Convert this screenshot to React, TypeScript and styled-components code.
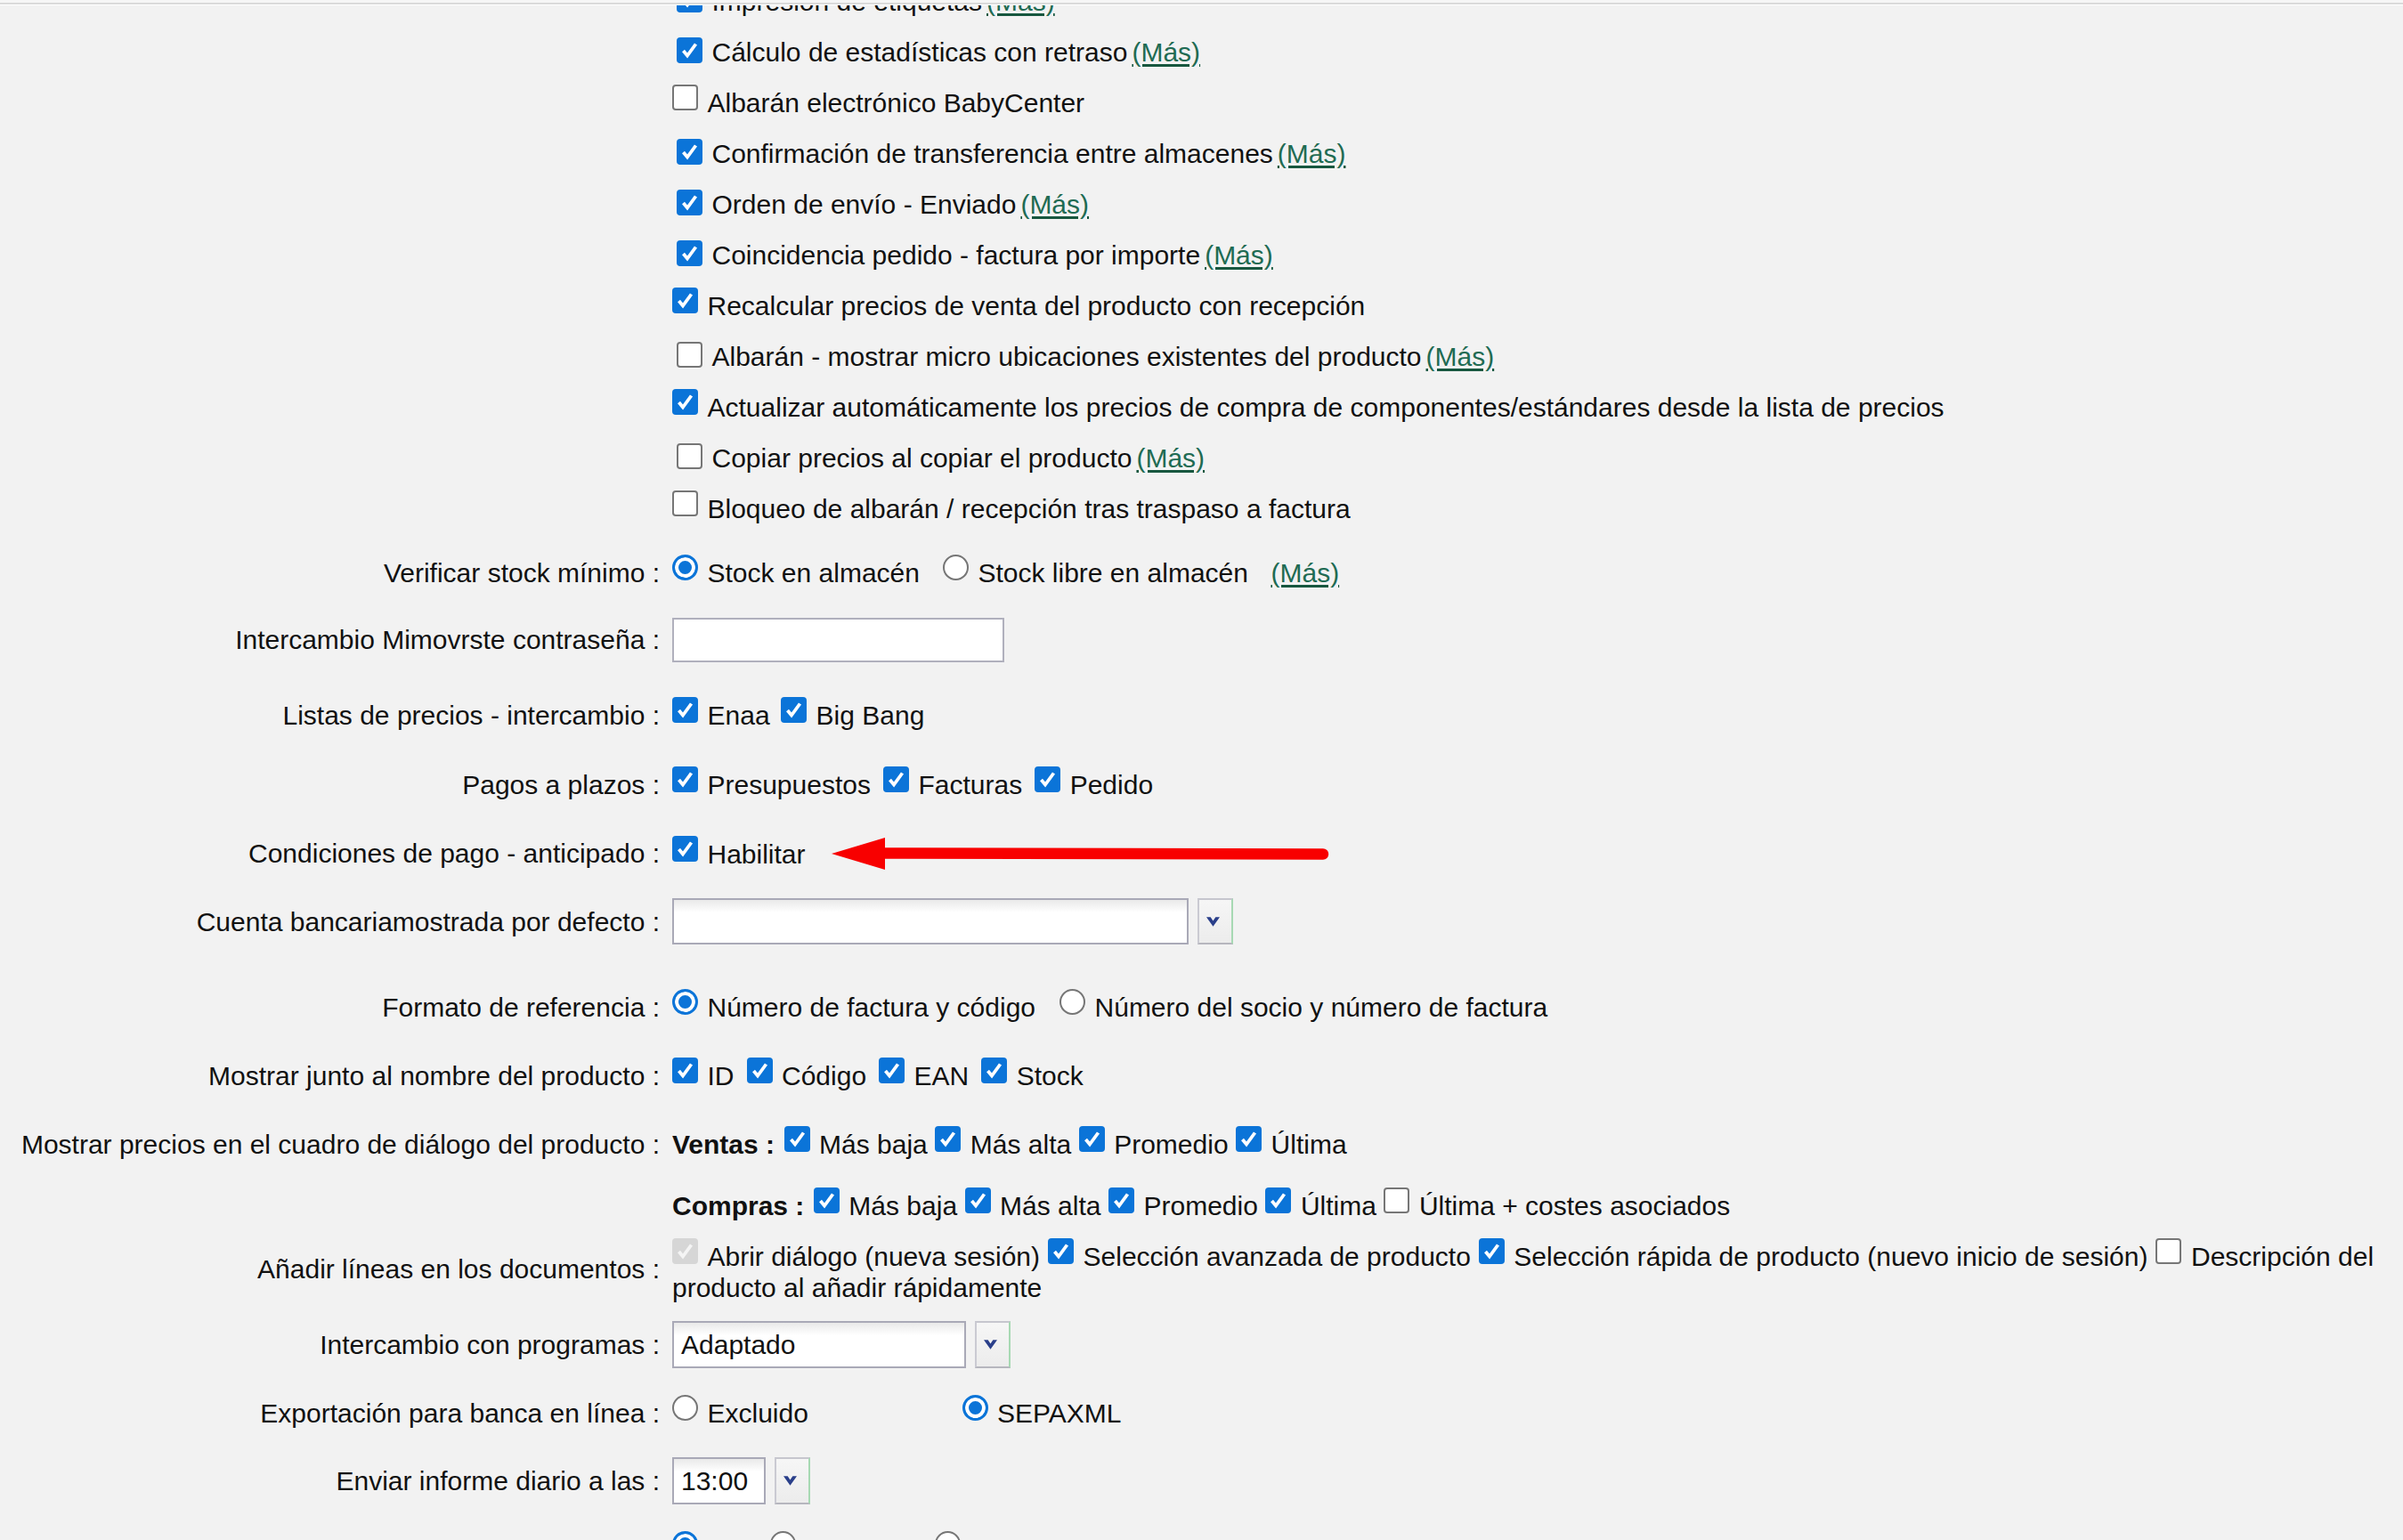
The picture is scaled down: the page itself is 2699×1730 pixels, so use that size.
import React from "react";
import styled, { createGlobalStyle } from "styled-components";

const GlobalStyle = createGlobalStyle`
  html, body {
    margin: 0;
    padding: 0;
  }
  body {
    background: #f2f2f2;
    font-family: "Liberation Sans", Arial, sans-serif;
    font-size: 30px;
    line-height: 35px;
    color: #111;
    overflow: hidden;
  }
`;

const Viewport = styled.div`
  height: 1730px;
  display: flex;
  flex-direction: column;
  overflow: hidden;
`;

const TopEdge = styled.div`
  flex: none;
  height: 3px;
  background: #f6f6f6;
  border-bottom: 2px solid #dadada;
  box-shadow: 0 1px 0 #fff;
  position: relative;
  z-index: 1;
`;

const Scroller = styled.div`
  flex: 1;
  overflow: hidden;
`;

const Form = styled.div`
  display: flex;
  flex-direction: column;
  margin-top: -32.5px;
`;

const Row = styled.div<{ $gap?: number }>`
  display: grid;
  grid-template-columns: 741px 1fr;
  column-gap: 14px;
  align-items: center;
  margin-top: ${(p) => p.$gap ?? 0}px;
`;

const Label = styled.div<{ $raise?: number }>`
  min-height: 50px;
  display: flex;
  align-items: center;
  justify-content: flex-end;
  white-space: nowrap;
  padding-bottom: ${(p) => (p.$raise ?? 0) * 2}px;
`;

const Value = styled.div`
  min-height: 50px;
  display: flex;
  align-items: center;
`;

const Line = styled.div<{ $gap?: number }>`
  --opt-gap: ${(p) => p.$gap ?? 12}px;
`;

const List = styled.div`
  display: flex;
  flex-direction: column;
`;

const ListItem = styled.div`
  height: 57.1px;
  display: flex;
  align-items: center;
`;

const Option = styled.label<{ $w?: number }>`
  display: ${(p) => (p.$w ? "inline-block" : "inline")};
  min-width: ${(p) => (p.$w ? `${p.$w}px` : "0")};
  & + & {
    margin-left: var(--opt-gap);
  }
`;

const Box = styled.span<{ $on?: boolean; $disabled?: boolean; $more?: boolean }>`
  display: inline-block;
  box-sizing: border-box;
  width: 29px;
  height: 29px;
  overflow: hidden;
  vertical-align: baseline;
  border-radius: 4px;
  margin: -4px 10.5px ${(p) => (p.$more ? "-2px" : "2px")} ${(p) => (p.$more ? "5px" : "0")};
  background: ${(p) => (p.$disabled ? "#d6d6d6" : p.$on ? "#0b74d8" : "#fff")};
  border: ${(p) => (p.$on ? "none" : "2px solid #767676")};

  svg {
    display: block;
  }
`;

const Radio = styled.span<{ $on?: boolean }>`
  display: inline-block;
  box-sizing: border-box;
  width: 29px;
  height: 29px;
  overflow: hidden;
  vertical-align: baseline;
  border-radius: 50%;
  margin: -4px 10.5px 2px 0;
  background: ${(p) => (p.$on ? "#0b74d8" : "#fff")};
  border: ${(p) => (p.$on ? "3px solid #0b74d8" : "2px solid #767676")};
  box-shadow: ${(p) => (p.$on ? "inset 0 0 0 4px #fff" : "none")};
`;

const More = styled.a<{ $gap?: number }>`
  color: #1f6b53;
  text-decoration: underline;
  text-decoration-thickness: 3px;
  text-underline-offset: 3px;
  text-decoration-color: #17573f;
  margin-left: ${(p) => p.$gap ?? 5}px;
  cursor: pointer;
`;

const Strong = styled.b`
  font-weight: bold;
  margin-right: 10.5px;
`;

const TextInput = styled.div<{ $w: number }>`
  box-sizing: border-box;
  width: ${(p) => p.$w}px;
  height: 50px;
  background: #fff;
  border: 2px solid #b0b0bd;
`;

const SelectWrap = styled.div`
  display: flex;
  align-items: stretch;
  gap: 9.5px;
`;

const SelectBox = styled.div<{ $w: number; $h: number }>`
  box-sizing: border-box;
  width: ${(p) => p.$w}px;
  height: ${(p) => p.$h}px;
  padding-left: 8px;
  display: flex;
  align-items: center;
  background: linear-gradient(#e9e9e9 0, #fff 14px);
  border: 2px solid #a9a9b7;
`;

const SelectButton = styled.div`
  box-sizing: border-box;
  width: 40px;
  display: flex;
  align-items: center;
  justify-content: center;
  padding-right: 4px;
  background: linear-gradient(#f6f6f6, #ececec);
  border-top: 2px solid #c6c6ce;
  border-left: 2px solid #cacad2;
  border-bottom: 2px solid #b6b6be;
  border-right: 2px solid #a7d9b3;
`;

const Arrow = styled.svg`
  vertical-align: -8.3px;
  margin-left: 29px;
`;

function Check({ on, disabled, more }: { on?: boolean; disabled?: boolean; more?: boolean }) {
  return (
    <Box $on={on || disabled} $disabled={disabled} $more={more}>
      {(on || disabled) && (
        <svg width="29" height="29" viewBox="0 0 29 29">
          <polyline
            points="7.5,15 12,20.5 21.5,7.5"
            fill="none"
            stroke={disabled ? "#f4f4f4" : "#fff"}
            strokeWidth="3.8"
          />
        </svg>
      )}
    </Box>
  );
}

function Chevron() {
  return (
    <svg width="15" height="11" viewBox="0 0 16 11">
      <path d="M0 0 H5 L8 4.5 L11 0 H16 L8 11 Z" fill="#2a3f8a" />
    </svg>
  );
}

function Select({ w, h, value }: { w: number; h: number; value?: string }) {
  return (
    <SelectWrap>
      <SelectBox $w={w} $h={h}>{value}</SelectBox>
      <SelectButton>
        <Chevron />
      </SelectButton>
    </SelectWrap>
  );
}

const features: { text: string; on: boolean; more: boolean }[] = [
  { text: "Impresión de etiquetas", on: true, more: true },
  { text: "Cálculo de estadísticas con retraso", on: true, more: true },
  { text: "Albarán electrónico BabyCenter", on: false, more: false },
  { text: "Confirmación de transferencia entre almacenes", on: true, more: true },
  { text: "Orden de envío - Enviado", on: true, more: true },
  { text: "Coincidencia pedido - factura por importe", on: true, more: true },
  { text: "Recalcular precios de venta del producto con recepción", on: true, more: false },
  { text: "Albarán - mostrar micro ubicaciones existentes del producto", on: false, more: true },
  {
    text: "Actualizar automáticamente los precios de compra de componentes/estándares desde la lista de precios",
    on: true,
    more: false,
  },
  { text: "Copiar precios al copiar el producto", on: false, more: true },
  { text: "Bloqueo de albarán / recepción tras traspaso a factura", on: false, more: false },
];

const priceChecks = ["Más baja", "Más alta", "Promedio", "Última"];

export default function App() {
  return (
    <>
      <GlobalStyle />
      <Viewport>
        <TopEdge />
        <Scroller>
          <Form>
            <Row>
              <Label />
              <List>
                {features.map((f) => (
                  <ListItem key={f.text}>
                    <Line>
                      <Option>
                        <Check on={f.on} more={f.more} />
                        {f.text}
                      </Option>
                      {f.more && <More>(Más)</More>}
                    </Line>
                  </ListItem>
                ))}
              </List>
            </Row>

            <Row $gap={17.5}>
              <Label>Verificar stock mínimo :</Label>
              <Value>
                <Line $gap={26}>
                  <Option>
                    <Radio $on />
                    Stock en almacén
                  </Option>
                  <Option>
                    <Radio />
                    Stock libre en almacén
                  </Option>
                  <More $gap={25.5}>(Más)</More>
                </Line>
              </Value>
            </Row>

            <Row $gap={25.5}>
              <Label>Intercambio Mimovrste contraseña :</Label>
              <Value>
                <TextInput $w={373} />
              </Value>
            </Row>

            <Row $gap={34.5}>
              <Label>Listas de precios - intercambio :</Label>
              <Value>
                <Line $gap={12.5}>
                  <Option>
                    <Check on />
                    Enaa
                  </Option>
                  <Option>
                    <Check on />
                    Big Bang
                  </Option>
                </Line>
              </Value>
            </Row>

            <Row $gap={28}>
              <Label>Pagos a plazos :</Label>
              <Value>
                <Line $gap={14}>
                  <Option>
                    <Check on />
                    Presupuestos
                  </Option>
                  <Option>
                    <Check on />
                    Facturas
                  </Option>
                  <Option>
                    <Check on />
                    Pedido
                  </Option>
                </Line>
              </Value>
            </Row>

            <Row $gap={27.5}>
              <Label>Condiciones de pago - anticipado :</Label>
              <Value>
                <Line>
                  <Option>
                    <Check on />
                    Habilitar
                  </Option>
                  <Arrow width="562" height="40" viewBox="0 0 562 40">
                    <polygon points="0,20 60,2 60,38" fill="#f80000" />
                    <line x1="55" y1="19.5" x2="552" y2="20.5" stroke="#f80000" strokeWidth="12.5" strokeLinecap="round" />
                  </Arrow>
                </Line>
              </Value>
            </Row>

            <Row $gap={25.5}>
              <Label>Cuenta bancariamostrada por defecto :</Label>
              <Value>
                <Select w={580} h={52} />
              </Value>
            </Row>

            <Row $gap={45.5}>
              <Label>Formato de referencia :</Label>
              <Value>
                <Line $gap={27}>
                  <Option>
                    <Radio $on />
                    Número de factura y código
                  </Option>
                  <Option>
                    <Radio />
                    Número del socio y número de factura
                  </Option>
                </Line>
              </Value>
            </Row>

            <Row $gap={27}>
              <Label>Mostrar junto al nombre del producto :</Label>
              <Value>
                <Line $gap={14}>
                  {["ID", "Código", "EAN", "Stock"].map((t) => (
                    <Option key={t}>
                      <Check on />
                      {t}
                    </Option>
                  ))}
                </Line>
              </Value>
            </Row>

            <Row $gap={27}>
              <Label>Mostrar precios en el cuadro de diálogo del producto :</Label>
              <Value>
                <Line $gap={8.5}>
                  <Strong>Ventas :</Strong>
                  {priceChecks.map((t) => (
                    <Option key={t}>
                      <Check on />
                      {t}
                    </Option>
                  ))}
                </Line>
              </Value>
            </Row>

            <Row $gap={19}>
              <Label />
              <Value>
                <Line $gap={8.5}>
                  <Strong>Compras :</Strong>
                  {priceChecks.map((t) => (
                    <Option key={t}>
                      <Check on />
                      {t}
                    </Option>
                  ))}
                  <Option>
                    <Check />
                    Última + costes asociados
                  </Option>
                </Line>
              </Value>
            </Row>

            <Row $gap={14}>
              <Label $raise={3}>Añadir líneas en los documentos :</Label>
              <Value>
                <Line $gap={9}>
                  <Option>
                    <Check disabled />
                    Abrir diálogo (nueva sesión)
                  </Option>
                  <Option>
                    <Check on />
                    Selección avanzada de producto
                  </Option>
                  <Option>
                    <Check on />
                    Selección rápida de producto (nuevo inicio de sesión)
                  </Option>
                  <Option>
                    <Check />
                    Descripción del producto al añadir rápidamente
                  </Option>
                </Line>
              </Value>
            </Row>

            <Row $gap={20}>
              <Label>Intercambio con programas :</Label>
              <Value>
                <Select w={330} h={53} value="Adaptado" />
              </Value>
            </Row>

            <Row $gap={26}>
              <Label>Exportación para banca en línea :</Label>
              <Value>
                <Line $gap={0}>
                  <Option $w={325.5}>
                    <Radio />
                    Excluido
                  </Option>
                  <Option>
                    <Radio $on />
                    SEPAXML
                  </Option>
                </Line>
              </Value>
            </Row>

            <Row $gap={24.5}>
              <Label>Enviar informe diario a las :</Label>
              <Value>
                <Select w={105} h={53} value="13:00" />
              </Value>
            </Row>

            <Row $gap={25.5}>
              <Label />
              <Value>
                <Line $gap={0}>
                  <Option $w={109.5}>
                    <Radio $on />
                  </Option>
                  <Option $w={185}>
                    <Radio />
                  </Option>
                  <Option>
                    <Radio />
                  </Option>
                </Line>
              </Value>
            </Row>
          </Form>
        </Scroller>
      </Viewport>
    </>
  );
}
